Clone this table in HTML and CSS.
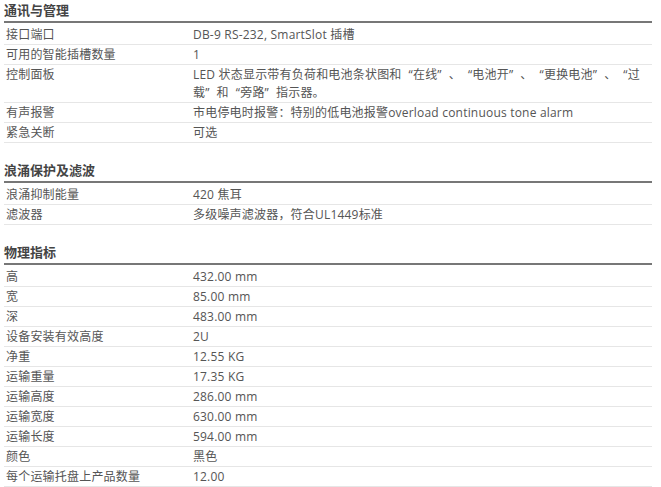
FILE: index.html
```html
<!DOCTYPE html>
<html lang="zh-CN">
<head>
    <meta charset="UTF-8">
    <meta name="viewport" content="width=device-width, initial-scale=1.0">
    <title>技术规格</title>
    <link rel="stylesheet" href="styles.css">
</head>
<body>
    <div class="specs">
        <section class="spec-group">
            <h3>通讯与管理</h3>
            <table class="spec-table">
                <tr><td class="spec-name">接口端口</td><td>DB-9 RS-232, SmartSlot 插槽</td></tr>
                <tr><td class="spec-name">可用的智能插槽数量</td><td>1</td></tr>
                <tr><td class="spec-name">控制面板</td><td>LED 状态显示带有负荷和电池条状图和<span class="ql">“</span>在线<span class="qr">”</span>、<span class="ql">“</span>电池开<span class="qr">”</span>、<span class="ql">“</span>更换电池<span class="qr">”</span>、<span class="ql">“</span>过<wbr>载<span class="qr">”</span>和<span class="ql">“</span>旁路<span class="qr">”</span>指示器。</td></tr>
                <tr><td class="spec-name">有声报警</td><td>市电停电时报警：特别的低电池报警overload continuous tone alarm</td></tr>
                <tr><td class="spec-name">紧急关断</td><td>可选</td></tr>
            </table>
        </section>

        <section class="spec-group">
            <h3>浪涌保护及滤波</h3>
            <table class="spec-table">
                <tr><td class="spec-name">浪涌抑制能量</td><td>420 焦耳</td></tr>
                <tr><td class="spec-name">滤波器</td><td>多级噪声滤波器，符合UL1449标准</td></tr>
            </table>
        </section>

        <section class="spec-group">
            <h3>物理指标</h3>
            <table class="spec-table">
                <tr><td class="spec-name">高</td><td>432.00 mm</td></tr>
                <tr><td class="spec-name">宽</td><td>85.00 mm</td></tr>
                <tr><td class="spec-name">深</td><td>483.00 mm</td></tr>
                <tr><td class="spec-name">设备安装有效高度</td><td>2U</td></tr>
                <tr><td class="spec-name">净重</td><td>12.55 KG</td></tr>
                <tr><td class="spec-name">运输重量</td><td>17.35 KG</td></tr>
                <tr><td class="spec-name">运输高度</td><td>286.00 mm</td></tr>
                <tr><td class="spec-name">运输宽度</td><td>630.00 mm</td></tr>
                <tr><td class="spec-name">运输长度</td><td>594.00 mm</td></tr>
                <tr><td class="spec-name">颜色</td><td>黑色</td></tr>
                <tr><td class="spec-name">每个运输托盘上产品数量</td><td>12.00</td></tr>
            </table>
        </section>
    </div>
</body>
</html>
```

FILE: styles.css
```css
body {
    font-family: "Open Sans", "Noto Sans CJK SC", sans-serif;
    font-size: 12px;
    color: #555;
    margin: 0;
    padding: 0;
    background: #fff;
}
.specs {
    width: 648px;
    margin-left: 4px;
}
.spec-group {
    margin-top: 17px;
}
.spec-group:first-child {
    margin-top: 0;
}
.spec-group h3 {
    margin: 0;
    font-size: 13px;
    font-weight: bold;
    line-height: 21px;
    color: #444;
    border-bottom: 2px solid #777;
}
.spec-table {
    width: 100%;
    border-collapse: collapse;
    margin-top: 2px;
}
.spec-table td {
    padding: 1px 2px 0;
    line-height: 18px;
    vertical-align: top;
    border-bottom: 1px solid #e6e6e6;
    letter-spacing: 0.2px;
}
.spec-table .spec-name {
    width: 183px;
}
/* quotes take a full-width cell, as in the CJK font of the original */
.ql {
    margin-left: 7px;
}
.qr {
    margin-right: 7px;
}
```
